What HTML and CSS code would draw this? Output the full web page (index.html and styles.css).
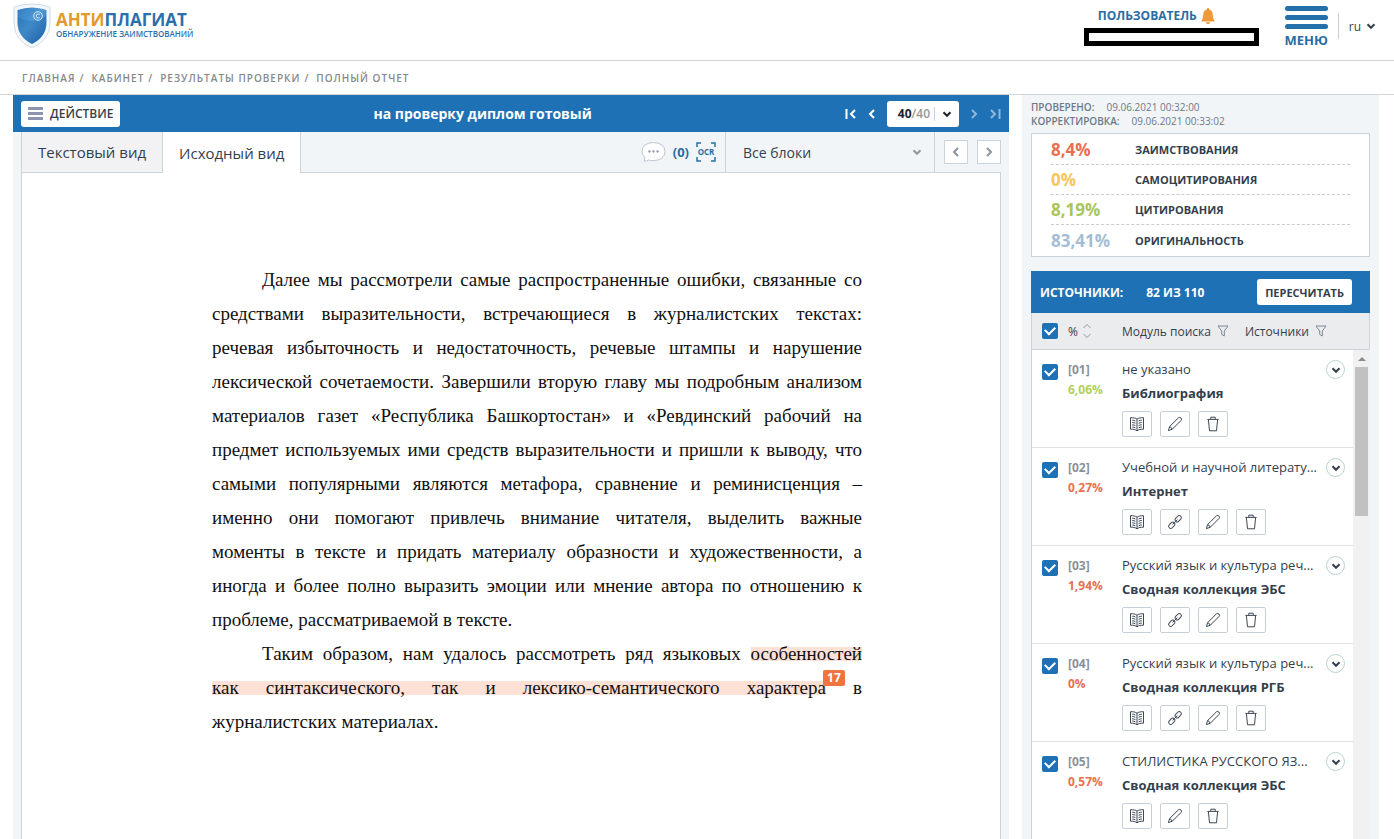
FILE: index.html
```html
<!DOCTYPE html>
<html lang="ru">
<head>
<meta charset="utf-8">
<meta name="viewport" content="width=device-width, initial-scale=1">
<title>Антиплагиат — Полный отчет</title>
<link rel="stylesheet" href="styles.css">
</head>
<body>
<svg class="sprite" aria-hidden="true">
  <symbol id="i-book" viewBox="0 0 16 16"><path d="M8 3.2C6.4 2 4 1.6 1.5 1.7V13.2C4 13.1 6.4 13.5 8 14.8C9.6 13.5 12 13.1 14.5 13.2V1.7C12 1.6 9.6 2 8 3.2ZM8 3.2V14.5M3.2 4.2Q5 4.2 6.4 5M3.2 6.5Q5 6.5 6.4 7.3M3.2 8.8Q5 8.8 6.4 9.6M3.2 11Q5 11 6.4 11.9M12.8 4.2Q11 4.2 9.6 5M12.8 6.5Q11 6.5 9.6 7.3M12.8 8.8Q11 8.8 9.6 9.6M12.8 11Q11 11 9.6 11.9"/></symbol>
  <symbol id="i-link" viewBox="0 0 16 16"><rect x="-3.6" y="-2.1" width="7.2" height="4.2" rx="2.1" transform="translate(11.2 4.8) rotate(-45)"/><rect x="-3.6" y="-2.1" width="7.2" height="4.2" rx="2.1" transform="translate(4.8 11.2) rotate(-45)"/><path d="M5.6 10.4L10.4 5.6"/></symbol>
  <symbol id="i-pen" viewBox="0 0 16 16"><path d="M1.4 14.6L2.6 10.6L11.6 1.7Q12.8 .9 13.9 2Q15 3.2 14.2 4.3L5.2 13.3ZM2.6 10.6Q4.6 11.2 5.2 13.3"/></symbol>
  <symbol id="i-trash" viewBox="0 0 16 16"><path d="M2.4 3.4H13.6M5.8 3.2V1.2H10.2V3.2M3.4 3.6L4.5 14.8H11.5L12.6 3.6"/></symbol>
  <symbol id="i-down" viewBox="0 0 10 10"><path d="M1.5 3.2L5 6.8L8.5 3.2"/></symbol>
  <symbol id="i-left" viewBox="0 0 10 10"><path d="M7 1L3 5L7 9"/></symbol>
  <symbol id="i-right" viewBox="0 0 10 10"><path d="M3 1L7 5L3 9"/></symbol>
  <symbol id="i-first" viewBox="0 0 12 10"><path d="M1.5 0V10M10 1L6 5L10 9"/></symbol>
  <symbol id="i-last" viewBox="0 0 12 10"><path d="M10.5 0V10M2 1L6 5L2 9"/></symbol>
  <symbol id="i-filter" viewBox="0 0 12 12"><path d="M1 1H11L7.3 6V11L4.7 9.4V6Z"/></symbol>
</svg>

<header class="header">
  <a class="logo" href="#">
    <svg class="logo-mark" viewBox="0 0 38 46" aria-hidden="true">
      <defs><linearGradient id="shield" x1="0" y1="0" x2="1" y2="1"><stop offset="0" stop-color="#2f7cc0"/><stop offset=".45" stop-color="#4f9ad6"/><stop offset="1" stop-color="#1d62a8"/></linearGradient></defs>
      <path d="M1 4Q19-2 37 4V20Q37 37 19 45Q1 37 1 20Z" fill="#f4f8fb" stroke="#cfdce8"/>
      <path d="M4.500 7Q19 2 33.500 7V20Q33 34 19 41Q5 34 4.500 20Z" fill="url(#shield)"/>
      <path d="M5 14Q18 22 33 13V20Q33 34 19 41Q5 34 4.500 20Z" fill="#14589e" opacity=".25"/>
      <circle cx="25" cy="13" r="4.300" fill="none" stroke="#d9ecfb"/>
      <path d="M26.800 11.500Q25 10 23.600 11.700Q22.800 13.200 23.800 14.500Q25.300 15.800 26.800 14.500" fill="none" stroke="#d9ecfb"/>
    </svg>
    <span class="logo-text">
      <span class="logo-name"><span class="logo-accent">АНТИ</span>ПЛАГИАТ</span>
      <span class="logo-sub">ОБНАРУЖЕНИЕ ЗАИМСТВОВАНИЙ</span>
    </span>
  </a>
  <div class="user">
    <a class="user-name" href="#">ПОЛЬЗОВАТЕЛЬ
      <svg class="bell" viewBox="0 0 14 18" aria-hidden="true"><path d="M7 1Q8.300 1 8.300 2.400Q11.800 3.500 11.800 8Q11.800 11.500 13.500 13.500V14.500H.5V13.500Q2.200 11.500 2.200 8Q2.200 3.500 5.700 2.400Q5.700 1 7 1ZM4.800 15.300H9.200Q8.700 17.300 7 17.300Q5.300 17.300 4.800 15.300Z"/></svg>
    </a>
    <div class="user-box"></div>
  </div>
  <button class="menu" type="button"><span class="menu-bar"></span><span class="menu-bar"></span><span class="menu-bar"></span><span class="menu-label">МЕНЮ</span></button>
  <button class="lang" type="button">ru <svg class="ico" viewBox="0 0 10 10"><use href="#i-down"/></svg></button>
</header>

<nav class="crumbs" aria-label="Навигация">
  <a href="#">ГЛАВНАЯ</a><span class="slash">/</span><a href="#">КАБИНЕТ</a><span class="slash">/</span><a href="#">РЕЗУЛЬТАТЫ ПРОВЕРКИ</a><span class="slash">/</span><span>ПОЛНЫЙ ОТЧЕТ</span>
</nav>

<main class="main">
  <section class="report">
    <div class="bar">
      <button class="action" type="button"><span class="burger"></span>ДЕЙСТВИЕ</button>
      <h1 class="title">на проверку диплом готовый</h1>
      <div class="pager">
        <button class="page-btn" type="button" aria-label="Первая"><svg class="ico-wide"><use href="#i-first"/></svg></button>
        <button class="page-btn" type="button" aria-label="Предыдущая"><svg class="ico"><use href="#i-left"/></svg></button>
        <button class="page-select" type="button"><b>40</b><span class="page-total">/40</span><span class="page-arrow"><svg class="ico"><use href="#i-down"/></svg></span></button>
        <button class="page-btn dim" type="button" aria-label="Следующая"><svg class="ico"><use href="#i-right"/></svg></button>
        <button class="page-btn dim" type="button" aria-label="Последняя"><svg class="ico-wide"><use href="#i-last"/></svg></button>
      </div>
    </div>
    <div class="tabs">
      <button class="tab" type="button">Текстовый вид</button>
      <button class="tab tab-active" type="button">Исходный вид</button>
      <div class="tools">
        <svg class="bubble" viewBox="0 0 26 22" aria-hidden="true"><path d="M3.500 20.500L4 16.500Q1 14 1 10.500Q1.500 1.500 13 1.200Q24.500 1.500 25 10.500Q24.500 19.500 13 20Q10 20 8 19.300Q6 20.700 3.500 20.500Z" fill="#fff" stroke="#b9c2cf"/><g fill="#8793a8"><circle cx="8.800" cy="10.500" r="1.200"/><circle cx="13" cy="10.500" r="1.200"/><circle cx="17.200" cy="10.500" r="1.200"/></g></svg>
        <span class="count">(0)</span>
        <span class="ocr"><svg viewBox="0 0 20 20" aria-hidden="true"><path d="M1 5V1H5M15 1H19V5M19 15V19H15M5 19H1V15"/></svg><span class="ocr-text">OCR</span></span>
      </div>
      <div class="blocks">
        <select class="blocks-select" aria-label="Блоки"><option>Все блоки</option></select>
        <svg class="ico blocks-arrow"><use href="#i-down"/></svg>
      </div>
      <div class="steps">
        <button class="step" type="button" aria-label="Назад"><svg class="ico"><use href="#i-left"/></svg></button>
        <button class="step" type="button" aria-label="Вперед"><svg class="ico"><use href="#i-right"/></svg></button>
      </div>
    </div>
    <article class="page">
      <p>Далее мы рассмотрели самые распространенные ошибки, связанные со<br>
      средствами выразительности, встречающиеся в журналистских текстах:<br>
      речевая избыточность и недостаточность, речевые штампы и нарушение<br>
      лексической сочетаемости. Завершили вторую главу мы подробным анализом<br>
      материалов газет «Республика Башкортостан» и «Ревдинский рабочий на<br>
      предмет используемых ими средств выразительности и пришли к выводу, что<br>
      самыми популярными являются метафора, сравнение и реминисценция –<br>
      именно они помогают привлечь внимание читателя, выделить важные<br>
      моменты в тексте и придать материалу образности и художественности, а<br>
      иногда и более полно выразить эмоции или мнение автора по отношению к
      <span class="tail">проблеме, рассматриваемой в тексте.</span></p>
      <p>Таким образом, нам удалось рассмотреть ряд языковых <mark>особенностей</mark><br>
      <mark>как синтаксического, так и лексико-семантического характера</mark><span class="ref"><a class="ref-badge" href="#">17</a></span> в
      <span class="tail">журналистских материалах.</span></p>
    </article>
  </section>

  <aside class="side">
    <div class="meta">
      <div><b>ПРОВЕРЕНО:</b><span>09.06.2021 00:32:00</span></div>
      <div><b>КОРРЕКТИРОВКА:</b><span>09.06.2021 00:33:02</span></div>
    </div>
    <dl class="stats">
      <div class="stat"><dt class="red">8,4%</dt><dd>ЗАИМСТВОВАНИЯ</dd></div>
      <div class="stat"><dt class="yellow">0%</dt><dd>САМОЦИТИРОВАНИЯ</dd></div>
      <div class="stat"><dt class="green">8,19%</dt><dd>ЦИТИРОВАНИЯ</dd></div>
      <div class="stat"><dt class="pale">83,41%</dt><dd>ОРИГИНАЛЬНОСТЬ</dd></div>
    </dl>
    <div class="sources">
      <div class="sources-head"><h2>ИСТОЧНИКИ:</h2><span>82 ИЗ 110</span><button class="recount" type="button">ПЕРЕСЧИТАТЬ</button></div>
      <div class="columns">
        <input class="check" type="checkbox" checked aria-label="Выбрать все">
        <div class="col-pct">% <svg class="sort" viewBox="0 0 8 16"><path d="M.5 5L4 1.500L7.500 5M.5 11L4 14.500L7.500 11"/></svg></div>
        <div class="col-name">Модуль поиска <svg class="filter"><use href="#i-filter"/></svg></div>
        <div class="col-name">Источники <svg class="filter"><use href="#i-filter"/></svg></div>
      </div>
      <div class="scroller">
        <ul class="list">
          <li class="source">
            <input class="check" type="checkbox" checked aria-label="Источник 01">
            <div class="score"><b class="num">[01]</b><b class="lime">6,06%</b></div>
            <div class="info"><div class="name">не указано</div><div class="module">Библиография</div>
              <div class="actions"><button type="button" aria-label="Читать"><svg><use href="#i-book"/></svg></button><button type="button" aria-label="Изменить"><svg><use href="#i-pen"/></svg></button><button type="button" aria-label="Удалить"><svg><use href="#i-trash"/></svg></button></div></div>
            <button class="more" type="button" aria-label="Подробнее"><svg class="ico"><use href="#i-down"/></svg></button>
          </li>
          <li class="source">
            <input class="check" type="checkbox" checked aria-label="Источник 02">
            <div class="score"><b class="num">[02]</b><b class="red">0,27%</b></div>
            <div class="info"><div class="name">Учебной и научной литерату...</div><div class="module">Интернет</div>
              <div class="actions"><button type="button" aria-label="Читать"><svg><use href="#i-book"/></svg></button><button type="button" aria-label="Ссылка"><svg><use href="#i-link"/></svg></button><button type="button" aria-label="Изменить"><svg><use href="#i-pen"/></svg></button><button type="button" aria-label="Удалить"><svg><use href="#i-trash"/></svg></button></div></div>
            <button class="more" type="button" aria-label="Подробнее"><svg class="ico"><use href="#i-down"/></svg></button>
          </li>
          <li class="source">
            <input class="check" type="checkbox" checked aria-label="Источник 03">
            <div class="score"><b class="num">[03]</b><b class="red">1,94%</b></div>
            <div class="info"><div class="name">Русский язык и культура реч...</div><div class="module">Сводная коллекция ЭБС</div>
              <div class="actions"><button type="button" aria-label="Читать"><svg><use href="#i-book"/></svg></button><button type="button" aria-label="Ссылка"><svg><use href="#i-link"/></svg></button><button type="button" aria-label="Изменить"><svg><use href="#i-pen"/></svg></button><button type="button" aria-label="Удалить"><svg><use href="#i-trash"/></svg></button></div></div>
            <button class="more" type="button" aria-label="Подробнее"><svg class="ico"><use href="#i-down"/></svg></button>
          </li>
          <li class="source">
            <input class="check" type="checkbox" checked aria-label="Источник 04">
            <div class="score"><b class="num">[04]</b><b class="red">0%</b></div>
            <div class="info"><div class="name">Русский язык и культура реч...</div><div class="module">Сводная коллекция РГБ</div>
              <div class="actions"><button type="button" aria-label="Читать"><svg><use href="#i-book"/></svg></button><button type="button" aria-label="Ссылка"><svg><use href="#i-link"/></svg></button><button type="button" aria-label="Изменить"><svg><use href="#i-pen"/></svg></button><button type="button" aria-label="Удалить"><svg><use href="#i-trash"/></svg></button></div></div>
            <button class="more" type="button" aria-label="Подробнее"><svg class="ico"><use href="#i-down"/></svg></button>
          </li>
          <li class="source">
            <input class="check" type="checkbox" checked aria-label="Источник 05">
            <div class="score"><b class="num">[05]</b><b class="red">0,57%</b></div>
            <div class="info"><div class="name">СТИЛИСТИКА РУССКОГО ЯЗ...</div><div class="module">Сводная коллекция ЭБС</div>
              <div class="actions"><button type="button" aria-label="Читать"><svg><use href="#i-book"/></svg></button><button type="button" aria-label="Изменить"><svg><use href="#i-pen"/></svg></button><button type="button" aria-label="Удалить"><svg><use href="#i-trash"/></svg></button></div></div>
            <button class="more" type="button" aria-label="Подробнее"><svg class="ico"><use href="#i-down"/></svg></button>
          </li>
        </ul>
        <div class="track"><svg class="track-up" viewBox="0 0 8 4"><path d="M0 4L4 0L8 4Z"/></svg><div class="thumb"></div></div>
      </div>
    </div>
  </aside>
</main>
</body>
</html>
```

FILE: styles.css
```css
* { box-sizing: border-box; }
body {
  margin: 0;
  height: 100vh;
  overflow: hidden;
  display: flex;
  flex-direction: column;
  background: #fff;
  color: #343f4d;
  font-family: "Open Sans", "Noto Sans", sans-serif;
  font-size: 13px;
}
button, select { font: inherit; color: inherit; border: 0; background: none; padding: 0; margin: 0; }
a { color: inherit; text-decoration: none; }
h1, h2, p, ul, dl, dd { margin: 0; padding: 0; }
svg { fill: none; flex: none; }
.sprite { position: absolute; width: 0; height: 0; }
.ico { width: 10px; height: 10px; stroke: currentColor; stroke-width: 2; display: block; }
.ico-wide { width: 12px; height: 10px; stroke: currentColor; stroke-width: 2; display: block; }

/* header */
.header {
  flex: none;
  display: flex;
  align-items: flex-start;
  height: 61px;
  padding: 3px 18px 0 13px;
  border-bottom: 1px solid #d3d6d8;
}
.logo { display: flex; gap: 5px; margin-right: auto; }
.logo-mark { width: 38px; height: 46px; }
.logo-text { display: flex; flex-direction: column; padding-top: 8px; font-weight: 700; color: #2a70ad; white-space: nowrap; }
.logo-name { font-size: 17px; line-height: 18px; }
.logo-accent { color: #e39a2d; }
.logo-sub { font-size: 8px; line-height: 10px; font-weight: 600; }
.user { width: 175px; margin-right: 26px; }
.user-name { display: flex; align-items: center; gap: 4px; padding-left: 14px; height: 25px; font-size: 12px; font-weight: 700; color: #2a6ca3; }
.bell { width: 14px; height: 18px; fill: #ee9a3a; }
.user-box { height: 18px; border: 5px solid #000; }
.menu { display: flex; flex-direction: column; align-items: center; gap: 4px; width: 43px; padding-top: 3px; margin-right: 10px; font-size: 13px; line-height: 14px; font-weight: 700; color: #2a6ca3; }
.menu-bar { height: 5px; border-radius: 3px; background: #2470ab; align-self: stretch; }
.lang { display: flex; align-items: center; gap: 5px; height: 26px; margin-top: 10px; padding-left: 10px; border-left: 1px solid #c9ced3; font-size: 12px; }

.crumbs {
  flex: none;
  display: flex;
  align-items: center;
  height: 34px;
  padding-left: 22px;
  border-bottom: 1px solid #d3d6d8;
  font-size: 10px;
  font-weight: 600;
  letter-spacing: 1px;
  color: #85898c;
}
.slash { margin: 0 7px 0 4px; }

.main { flex: 1; min-height: 0; display: flex; gap: 13px; padding: 0 15px 0 13px; }

/* report */
.report { flex: 1; min-width: 0; display: flex; flex-direction: column; background: #f1f5f8; }
.bar { flex: none; display: flex; align-items: center; height: 37px; padding: 0 8px; background: #1f71b5; color: #fff; }
.action { display: flex; align-items: center; gap: 7px; height: 26px; padding: 0 7px; border-radius: 3px; background: #fff; color: #343f4d; font-size: 12px; font-weight: 600; }
.burger { width: 15px; height: 13px; border-top: 3px solid #8b95ad; border-bottom: 3px solid #8b95ad; background: linear-gradient(#8b95ad, #8b95ad) center / 100% 3px no-repeat; }
.title { flex: 1; text-align: center; font-size: 14px; line-height: 20px; font-weight: 700; }
.pager { display: flex; align-items: center; gap: 10px; }
.page-select { display: flex; align-items: center; height: 26px; padding-left: 11px; border-radius: 3px; background: #fff; color: #20242a; font-size: 12px; }
.page-total { color: #979797; font-weight: 600; }
.page-arrow { display: flex; align-items: center; height: 14px; margin-left: 4px; padding: 0 7px; border-left: 1px solid #cfd3d6; }
.dim { opacity: .5; }

.tabs { flex: none; display: flex; height: 41px; margin: 0 8px; border-bottom: 1px solid #ccd4db; border-left: 1px solid #ccd4db; }
.tab { height: 40px; padding: 0 16px; border-right: 1px solid #ccd4db; background: #f2f2f4; font-size: 15px; white-space: nowrap; }
.tab-active { height: 41px; background: #fff; }
.tools { display: flex; align-items: center; gap: 7px; margin-left: auto; padding-right: 9px; }
.bubble { width: 25px; height: 22px; }
.count { font-size: 13px; font-weight: 700; color: #2a6ca3; }
.ocr { display: grid; place-items: center; width: 20px; height: 20px; }
.ocr > * { grid-area: 1 / 1; }
.ocr svg { width: 20px; height: 20px; stroke: #2a6ca3; stroke-width: 1.5; }
.ocr-text { font-size: 8px; line-height: 10px; font-weight: 700; color: #2a6ca3; }
.blocks { display: grid; align-items: center; width: 210px; border: solid #ccd4db; border-width: 0 1px; }
.blocks > * { grid-area: 1 / 1; }
.blocks-select { appearance: none; width: 100%; height: 40px; padding-left: 17px; font-size: 14px; }
.blocks-arrow { justify-self: end; margin-right: 12px; color: #8f99a5; pointer-events: none; }
.steps { display: flex; align-items: center; gap: 9px; padding-left: 9px; }
.step { display: grid; place-items: center; width: 24px; height: 24px; border: 1px solid #ccd4db; background: #fff; color: #8a93a0; }

.page {
  flex: 1;
  min-height: 0;
  overflow: hidden;
  margin: 0 8px;
  padding: 90px 138px 0 190px;
  border: solid #ccd4db;
  border-width: 0 1px;
  background: #fff;
  color: #111;
  font: 19px/34px "Liberation Serif", serif;
  text-align: justify;
  text-align-last: justify;
}
.page p { text-indent: 50px; }
.tail { display: block; text-indent: 0; text-align-last: left; }
mark { color: inherit; background: linear-gradient(#fde0d6, #fde0d6) 0 60% / 100% 14px no-repeat; }
.ref { position: relative; }
.ref-badge {
  position: absolute;
  left: -3px;
  bottom: 12px;
  width: 22px;
  border-radius: 2px;
  background: #f0743f;
  color: #fff;
  font: 700 12px/16px "Open Sans", sans-serif;
  text-align: center;
  text-align-last: center;
  text-indent: 0;
}

/* sidebar */
.side { flex: none; width: 357px; display: flex; flex-direction: column; padding: 5px 9px 0; background: #f1f5f8; }
.meta { font-size: 10px; line-height: 14px; color: #6d7986; margin-bottom: 5px; }
.meta div { display: flex; gap: 12px; }
.meta b { font-weight: 600; }
.stats { border: 1px solid #ccd4db; background: #fff; padding: 1px 19px; margin-bottom: 14px; }
.stat { display: flex; align-items: center; height: 30px; border-bottom: 1px dashed #c9cdd1; }
.stat:last-child { border-bottom: 0; }
.stat dt { width: 84px; font-size: 17px; font-weight: 700; }
.stat dd { font-size: 11px; font-weight: 700; }
.red { color: #e9704f; }
.yellow { color: #f6c65b; }
.green { color: #a9c65a; }
.pale { color: #a3bed4; }
.lime { color: #b3cf5a; }

.sources { flex: 1; min-height: 0; display: flex; flex-direction: column; }
.sources-head { flex: none; display: flex; align-items: center; gap: 23px; height: 42px; padding: 0 18px 0 9px; background: #1f71b5; color: #fff; font-size: 12px; font-weight: 700; }
.sources-head h2 { font-size: 12px; }
.recount { margin-left: auto; height: 26px; padding: 0 8px; border-radius: 3px; background: #fff; color: #343f4d; font-size: 11px; font-weight: 700; }
.columns { flex: none; display: flex; align-items: center; height: 37px; padding-left: 10px; border: 1px solid #ccd4db; border-top: 0; background: #ebecee; font-size: 12px; }
.check {
  flex: none;
  appearance: none;
  display: grid;
  place-items: center;
  width: 16px;
  height: 16px;
  margin: 0 10px 0 0;
  border-radius: 2px;
  background: #1f71b5;
}
.check::before { content: ""; width: 8px; height: 5px; border: solid #fff; border-width: 0 0 2px 2px; transform: rotate(-45deg); margin-bottom: 3px; }
.col-pct { display: flex; align-items: center; gap: 5px; width: 54px; }
.sort { width: 8px; height: 16px; stroke: #8f99a5; }
.col-name { display: flex; align-items: center; gap: 6px; margin-right: 16px; }
.filter { width: 12px; height: 12px; stroke: #7d8894; }

.scroller { flex: 1; min-height: 0; display: flex; overflow: hidden; border-left: 1px solid #ccd4db; background: #fff; }
.list { flex: 1; min-width: 0; list-style: none; }
.source { display: flex; align-items: flex-start; height: 98px; padding: 10px 8px 0 10px; border-bottom: 1px solid #dfe3e7; }
.source .check { margin-top: 4px; }
.score { display: flex; flex-direction: column; width: 54px; font-size: 12px; line-height: 20px; }
.score b { font-weight: 700; }
.num { color: #8b9199; }
.info { flex: 1; min-width: 0; white-space: nowrap; }
.name { line-height: 18px; }
.module { line-height: 20px; margin-top: 5px; font-weight: 700; }
.actions { display: flex; gap: 8px; margin-top: 8px; }
.actions button { display: grid; place-items: center; width: 30px; height: 26px; border: 1px solid #c6cfd7; border-radius: 2px; }
.actions svg { width: 16px; height: 16px; stroke: #3c4754; }
.more { flex: none; display: grid; place-items: center; width: 19px; height: 19px; border: 1px solid #b9d3cf; border-radius: 50%; }
.track { flex: none; display: flex; flex-direction: column; align-items: center; width: 17px; padding-top: 7px; background: #f1f1f1; }
.track-up { width: 8px; height: 4px; fill: #8b8b8b; margin-bottom: 6px; }
.thumb { width: 13px; height: 149px; background: #c1c1c1; }
```
